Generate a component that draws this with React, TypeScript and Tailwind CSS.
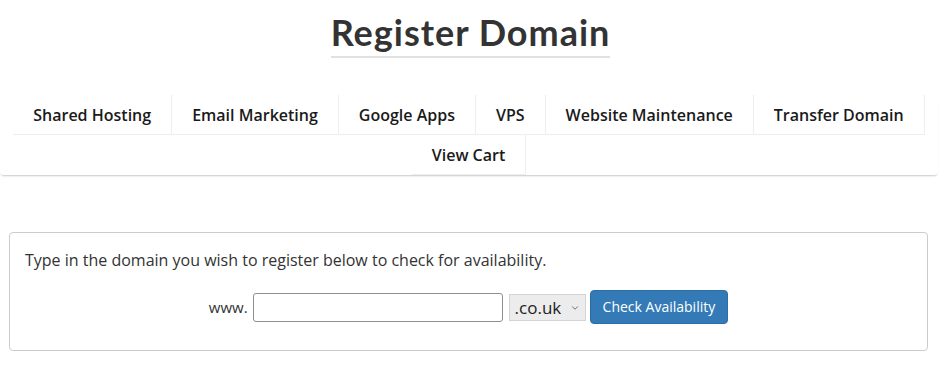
import { ChevronDown } from "lucide-react";

const NAV_ITEMS = [
  "Shared Hosting",
  "Email Marketing",
  "Google Apps",
  "VPS",
  "Website Maintenance",
  "Transfer Domain",
  "View Cart",
];

export default function App() {
  return (
    <div className="w-[941px] min-h-[382px] bg-white text-[#333] font-['Open_Sans',sans-serif]">
      {/* Title */}
      <div className="flex justify-center pt-[12px]">
        <h1 className="inline-block border-b-2 border-[#e1e1e1] pb-[4px] font-['Lato',sans-serif] text-[36px] leading-[40px] font-bold tracking-[1px] text-[#333]">
          Register Domain
        </h1>
      </div>

      {/* Product nav */}
      <div className="mt-[37px] w-[938px] rounded-b-[4px] shadow-[0_2px_2px_-1px_rgba(0,0,0,0.22)]">
        <ul className="flex flex-wrap justify-center">
          {NAV_ITEMS.map((item) => (
            <li
              key={item}
              className="h-[40px] px-[20px] flex items-center border-r border-b border-[#eee] text-[16px] font-semibold text-[#1a1a1a] whitespace-nowrap"
            >
              {item}
            </li>
          ))}
        </ul>
      </div>

      {/* Domain check panel */}
      <div className="mt-[57px] ml-[9px] w-[919px] rounded-[4px] border border-[#ccc] px-[15px] pt-[16px] pb-[26px]">
        <p className="text-[16px] leading-[22px] text-[#333]">
          Type in the domain you wish to register below to check for availability.
        </p>
        <div className="mt-[19px] flex items-center justify-center gap-[4px]">
          <span className="text-[15px] text-[#333] mr-[1px]">www.</span>
          <input
            type="text"
            className="w-[250px] h-[29px] rounded-[3px] border border-[#8e8e8e] bg-white px-2 text-[15px] outline-none"
          />
          <div className="relative ml-[2px]">
            <select
              defaultValue=".co.uk"
              className="appearance-none w-[77px] h-[27px] border border-[#d4d4d4] bg-[#ececec] pl-[5px] text-[17px] leading-[25px] text-[#222] outline-none"
            >
              <option>.co.uk</option>
              <option>.com</option>
              <option>.net</option>
              <option>.org</option>
            </select>
            <ChevronDown
              size={10}
              strokeWidth={2}
              className="pointer-events-none absolute right-[6px] top-[9px] text-[#555]"
            />
          </div>
          <button className="h-[34px] px-[12px] rounded-[4px] bg-[#337ab7] border border-[#2e6da4] text-white text-[14px] leading-[20px]">
            Check Availability
          </button>
        </div>
      </div>
    </div>
  );
}
